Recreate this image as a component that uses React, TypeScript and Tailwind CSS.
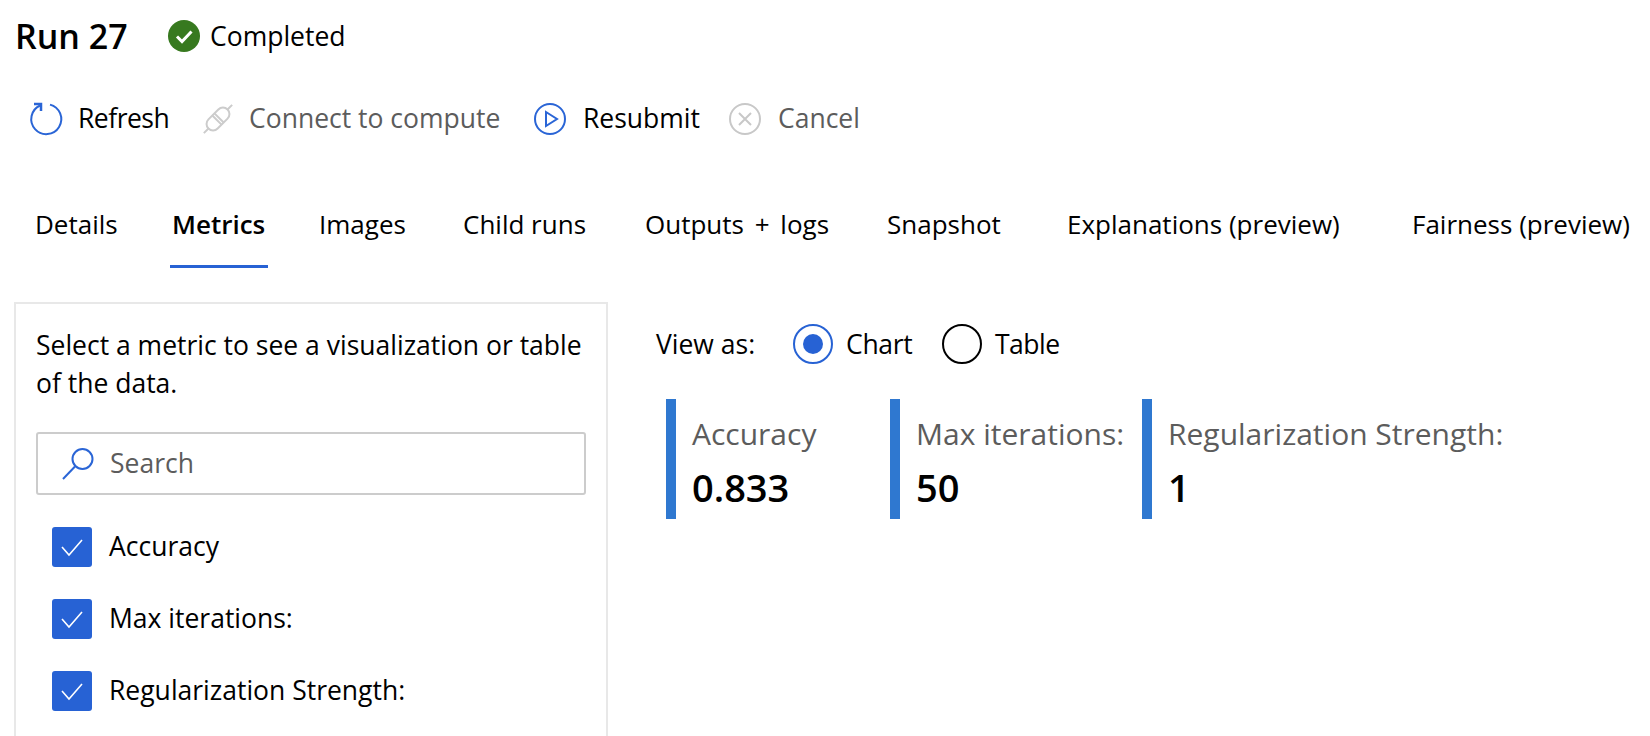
import React from "react";

const Check = () => (
  <div className="w-10 h-10 rounded-[3px] bg-[#2762d4] flex items-center justify-center shrink-0">
    <svg width="24" height="20" viewBox="0 0 24 20" fill="none" stroke="#fff" strokeWidth="1.6">
      <path d="M2 10 L9 18 L22 3" />
    </svg>
  </div>
);

const Stat = ({ w, label, value }: { w: string; label: string; value: string }) => (
  <div className={`${w} h-[120px] border-l-[10px] border-[#2f78d0] pl-[16px] shrink-0`}>
    <div className="text-[30px] leading-[38px] text-[#5c5c5c] mt-4 whitespace-nowrap">{label}</div>
    <div className="text-[38px] leading-[48px] font-semibold text-black mt-[10px]">{value}</div>
  </div>
);

const tabs: [string, string, boolean][] = [
  ["Details", "w-[137px]", false],
  ["Metrics", "w-[147px]", true],
  ["Images", "w-[144px]", false],
  ["Child runs", "w-[182px]", false],
  ["Outputs + logs", "w-[242px] [word-spacing:4px]", false],
  ["Snapshot", "w-[180px]", false],
  ["Explanations (preview)", "w-[345px]", false],
  ["Fairness (preview)", "w-[220px]", false],
];

export default function App() {
  return (
    <div className="w-[1650px] h-[736px] overflow-hidden bg-white text-black text-[26.5px] font-['Open_Sans','Noto_Sans',sans-serif]">
      <div className="h-[72px] flex items-center pl-[15px]">
        <div className="text-[34px] font-semibold w-[153px]">Run 27</div>
        <svg width="32" height="32" viewBox="0 0 32 32" className="mr-[10px]">
          <circle cx="16" cy="16" r="16" fill="#37791f" />
          <path d="M9 16.5 L14 21.5 L23.5 11.5" fill="none" stroke="#fff" strokeWidth="3" />
        </svg>
        <div className="pt-[2px]">Completed</div>
      </div>

      <div className="h-[92px] flex items-center pl-[30px] pt-[9px] pb-[7px] text-[#5c5c5c]">
        <svg width="32" height="32" viewBox="0 0 32 32" fill="none" stroke="#2a65d6" strokeWidth="2" className="mr-[16px] overflow-visible">
          <path d="M20 1.6 A15 15 0 1 1 10 2.5" />
          <path d="M4 1 H11 V8" strokeWidth="2.5" />
        </svg>
        <div className="w-[124px] text-black tracking-[-0.5px]">Refresh</div>
        <svg width="32" height="32" viewBox="0 0 32 32" fill="none" stroke="#cccccc" strokeWidth="2" className="mr-[15px] overflow-visible">
          <g transform="rotate(-45 16 16)">
            <rect x="2.5" y="9.5" width="27" height="13" rx="6.5" />
            <path d="M14.5 9.5 V22.5 M17.5 9.5 V22.5 M-4 16 H2.5 M29.5 16 H36" />
          </g>
        </svg>
        <div className="w-[285px]">Connect to compute</div>
        <svg width="32" height="32" viewBox="0 0 32 32" fill="none" stroke="#2a65d6" strokeWidth="2" className="mr-[17px]">
          <circle cx="16" cy="16" r="15" />
          <path d="M12 9 L23 16 L12 23 Z" />
        </svg>
        <div className="w-[146px] text-black">Resubmit</div>
        <svg width="32" height="32" viewBox="0 0 32 32" fill="none" stroke="#c8c8c8" strokeWidth="2" className="mr-[17px]">
          <circle cx="16" cy="16" r="15" />
          <path d="M10 10 L22 22 M22 10 L10 22" />
        </svg>
        <div>Cancel</div>
      </div>

      <div className="h-[138px] flex items-start pl-[35px] pt-[41px] text-[26px]">
        {tabs.map(([t, w, active]) => (
          <div key={t} className={`${w} relative shrink-0 whitespace-nowrap leading-[38px] ${active ? "font-semibold" : ""}`}>
            {t}
            {active && <div className="absolute left-[-2px] w-[98px] top-[60px] h-[3px] bg-[#2762d4]" />}
          </div>
        ))}
      </div>

      <div className="flex pl-[14px]">
        <div className="w-[594px] h-[500px] shrink-0 border-2 border-[#e8e8e8] pl-[20px] pr-[20px] pt-[22px]">
          <div className="leading-[38px]">Select a metric to see a visualization or table of the data.</div>
          <div className="mt-[30px] h-[63px] border-2 border-[#cccccc] rounded-[3px] flex items-center pl-[24px] text-[#5c5c5c]">
            <svg width="32" height="32" viewBox="0 0 32 32" fill="none" stroke="#2a65d6" strokeWidth="2" className="mr-[16px]">
              <circle cx="20.5" cy="11" r="10" />
              <path d="M13 18.5 L1 31" />
            </svg>
            Search
          </div>
          <div className="mt-[32px] flex flex-col gap-[32px] pl-[16px]">
            {["Accuracy", "Max iterations:", "Regularization Strength:"].map((t) => (
              <div key={t} className="flex items-center gap-[17px]">
                <Check />
                <div>{t}</div>
              </div>
            ))}
          </div>
        </div>

        <div className="pl-[48px] pt-[22px]">
          <div className="flex items-center h-[40px]">
            <div className="w-[137px] pt-[2px]">View as:</div>
            <div className="w-10 h-10 rounded-full border-2 border-[#2762d4] flex items-center justify-center mr-[13px]">
              <div className="w-5 h-5 rounded-full bg-[#2762d4]" />
            </div>
            <div className="w-[96px] pt-[2px] tracking-[-0.3px]">Chart</div>
            <div className="w-10 h-10 rounded-full border-2 border-black mr-[13px]" />
            <div className="pt-[2px] tracking-[-0.5px]">Table</div>
          </div>
          <div className="flex mt-[35px] pl-[10px]">
            <Stat w="w-[224px]" label="Accuracy" value="0.833" />
            <Stat w="w-[252px]" label="Max iterations:" value="50" />
            <Stat w="w-[400px]" label="Regularization Strength:" value="1" />
          </div>
        </div>
      </div>
    </div>
  );
}
